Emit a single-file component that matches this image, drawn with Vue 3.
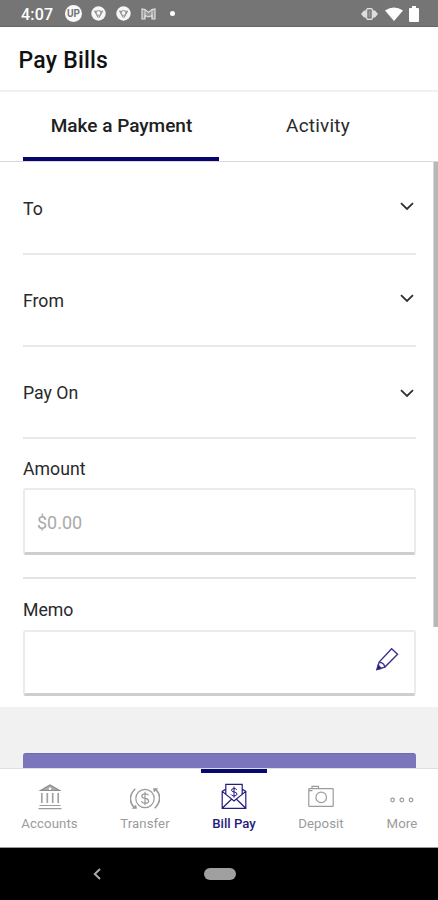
<script setup>
const selectors = [
  { label: 'To', lift: 'high' },
  { label: 'From', lift: 'high' },
  { label: 'Pay On', lift: 'low' }
]
</script>

<template>
  <div class="screen">
    <div class="status">
      <span class="time">4:07</span>
      <span class="badge"><span>UP</span></span>
      <svg v-for="n in 2" :key="n" class="chrome" viewBox="0 0 15 15">
        <circle cx="7.5" cy="7.5" r="7.2" fill="#f6f6f6" />
        <path d="M3 5.2H12M4 5.5L7.2 11.5M11.4 5.5L8 11.5" fill="none" stroke="#909090" stroke-width="1.1" />
        <circle cx="7.5" cy="7" r="2.4" fill="#f6f6f6" stroke="#929292" />
      </svg>
      <svg class="mail" viewBox="0 0 15 12">
        <path d="M1 11V1L4 1.4L7.5 4.4L11 1.4L14 1V11H11V7.5L7.5 9L4 7.5V11Z" fill="#999" stroke="#e6e6e6" stroke-width="1.1" />
        <path d="M4 2V10M11 2V10" stroke="#ddd" />
      </svg>
      <span class="dot"></span>
      <span class="grow"></span>
      <svg class="vibrate" viewBox="0 0 17 14">
        <path d="M0 7L3 3.5H4.5L6 1H11L12.5 3.5H14L17 7L14 10.5H12.5L11 13H6L4.5 10.5H3Z" fill="#dedede" />
        <rect x="6.9" y="3" width="3.2" height="8" fill="#999" stroke="#686868" />
      </svg>
      <svg class="wifi" viewBox="0 0 18 14">
        <path d="M0 3.5Q9-2.5 18 3.5L9 14Z" fill="#fff" />
      </svg>
      <svg class="battery" viewBox="0 0 10 16">
        <path d="M3 0H7V2H9Q10 2 10 3V15Q10 16 9 16H1Q0 16 0 15V3Q0 2 1 2H3Z" fill="#fff" />
      </svg>
    </div>

    <header class="header"><h1>Pay Bills</h1></header>

    <div class="tabs">
      <div class="tab active"><span>Make a Payment</span></div>
      <div class="tab"><span>Activity</span></div>
    </div>

    <main class="content">
      <div class="form">
        <div v-for="s in selectors" :key="s.label" class="select-row">
          <span>{{ s.label }}</span>
          <svg class="chevron" :class="s.lift" viewBox="0 0 14 9">
            <path d="M1 1.2L7 7L13 1.2" fill="none" stroke="#303034" stroke-width="1.8" />
          </svg>
        </div>
        <div class="field amount">
          <label>Amount</label>
          <div class="box">$0.00</div>
        </div>
        <div class="field memo">
          <label>Memo</label>
          <div class="box">
            <svg class="pencil" viewBox="0 0 24 24">
              <path d="M1.2 22.8L3.3 15.2L16.3 1.3L22.5 7L9.3 20.4Z" />
              <path d="M3.3 15.2L6 16L8 17.5L9.3 20.4" />
              <path class="tip" d="M1 23L2.3 18.4L5.4 21.7Z" />
            </svg>
          </div>
        </div>
      </div>
      <div class="actions"><div class="submit"></div></div>
      <div class="scrollbar"></div>
    </main>

    <nav class="nav">
      <div class="item">
        <svg viewBox="0 0 30 28">
          <path d="M5.5 7.5L15 2L24.5 7.5Z" fill="#aaa" stroke="#8d8d8d" />
          <circle cx="15" cy="5.7" r="1.2" fill="#fff" stroke="none" />
          <path d="M6.8 10V20M12.3 10V20M17.7 10V20M23.2 10V20" stroke="#a2a2a2" stroke-width="1.7" />
          <path d="M4.5 22.5H25.5M3.5 25.7H26.5" />
        </svg>
        <span>Accounts</span>
      </div>
      <div class="item">
        <svg viewBox="0 0 30 28">
          <circle cx="15" cy="15.5" r="9.2" />
          <path d="M18.5 12.2Q17.8 10.8 15 10.8Q11.8 10.8 11.8 13.2Q11.8 15 15 15.4Q18.6 15.8 18.6 18Q18.6 20.3 15 20.3Q12.2 20.3 11.4 18.3M15 8.8V22.2" />
          <path d="M5.2 5.8Q-4 15.5 4.2 24.8M24.8 25.2Q34 15.5 25.8 6.2" stroke-width="1.6" />
          <path d="M2.4 25.4H6.6L5.8 22ZM27.6 5.6H23.4L24.2 9Z" fill="#999" stroke-width=".6" />
        </svg>
        <span>Transfer</span>
      </div>
      <div class="item selected">
        <svg viewBox="0 0 30 28">
          <path d="M6.2 6.5L3.2 8.4V25.4H26.8V8.4L23.8 6.5M3.2 8.4L15 18L26.8 8.4M3.5 25L12.5 16.2M26.5 25L17.5 16.2M6.8 11V1.4H23.2V11" />
          <path d="M17.8 6.8Q17.2 5.5 15 5.5Q12.5 5.5 12.5 7.2Q12.5 8.6 15 8.9Q18 9.4 18 11.1Q18 12.9 15 12.9Q12.7 12.9 12 11.4M15 3.5V14.7" stroke-width="1" />
        </svg>
        <span>Bill Pay</span>
      </div>
      <div class="item">
        <svg viewBox="0 0 30 28">
          <rect x="2.8" y="5.6" width="24.4" height="17.8" rx=".6" />
          <path d="M6 5.2V3.4H12.5V5.2M3 7.6H6.5" />
          <circle cx="15.2" cy="14.4" r="5.3" />
        </svg>
        <span>Deposit</span>
      </div>
      <div class="item">
        <svg viewBox="0 0 30 28">
          <circle cx="5.6" cy="17" r="1.8" /><circle cx="14.8" cy="17" r="1.8" /><circle cx="24" cy="17" r="1.8" />
        </svg>
        <span>More</span>
      </div>
    </nav>

    <div class="system">
      <svg class="back" viewBox="0 0 8 12"><path d="M7 1L1.8 6L7 11" fill="none" stroke="#aaa" stroke-width="2" /></svg>
      <span class="home"></span>
    </div>
  </div>
</template>

<style>
body { margin: 0; background: #fff; }
</style>

<style scoped>
* { box-sizing: border-box; }
svg { display: block; flex: none; }
.screen { width: 438px; height: 900px; display: flex; flex-direction: column; overflow: hidden; background: #fff; color: #29292b; font-family: Roboto, sans-serif; }
.status { height: 27px; flex: none; display: flex; align-items: center; padding: 1px 19px 0 21px; background: #757575; border-bottom: 1px solid #656565; color: #fff; }
.time { width: 44px; font-size: 16px; line-height: 20px; font-weight: 500; letter-spacing: .2px; padding-top: 3px; }
.badge { width: 17px; height: 17px; border-radius: 50%; background: #fafafa; color: #757575; display: flex; align-items: center; justify-content: center; font-size: 10px; line-height: 10px; font-weight: 700; margin-right: 9px; }
.chrome { width: 15px; height: 15px; margin-right: 10px; }
.mail { width: 15px; height: 12px; }
.dot { width: 5px; height: 5px; border-radius: 50%; background: #fff; margin-left: 14px; }
.grow { flex: 1; }
.vibrate { width: 17px; height: 14px; }
.wifi { width: 18px; height: 14px; margin-left: 7px; }
.battery { width: 10px; height: 16px; margin-left: 6px; }
.header { height: 65px; flex: none; display: flex; align-items: center; padding: 4px 18px 0 18.6px; border-bottom: 2px solid #f0f0f0; }
h1 { margin: 0; color: #111; font-size: 23px; line-height: 28px; font-weight: 500; letter-spacing: .2px; }
.tabs { height: 70px; flex: none; display: flex; padding: 0 23px; border-bottom: 1px solid #d8d8da; }
.tab { width: 196px; display: flex; align-items: center; justify-content: center; font-size: 19px; line-height: 24px; letter-spacing: .2px; padding: 0 0 1px 2px; }
.tab.active { border-bottom: 4px solid #06066e; color: #202022; font-weight: 500; letter-spacing: 0; padding: 3px 0 0 1px; }
.content { position: relative; height: 606px; flex: none; display: flex; flex-direction: column; overflow: hidden; }
.form { height: 545px; flex: none; padding: 0 22px 0 23px; }
.select-row { height: 92px; border-bottom: 2px solid #e8e8e8; display: flex; align-items: center; justify-content: space-between; padding: 2px 2px 0 0; font-size: 17.7px; line-height: 24px; }
.select-row:first-child { height: 93px; padding-top: 3px; }
.chevron { width: 14px; height: 9px; }
.chevron.high { margin-bottom: 5px; }
.chevron.low { margin-bottom: 0; }
.field { height: 141px; padding-top: 19px; border-bottom: 2px solid #e4e4e4; }
.field.amount { height: 140px; padding-top: 18px; }
.field label { display: block; height: 31px; font-size: 17.7px; line-height: 24px; }
.box { height: 67px; border: 2px solid #ebebeb; border-bottom: 3px solid #cecece; border-radius: 3px; display: flex; align-items: center; padding: 2px 14px 0 12px; font-size: 18px; color: #aaa; }
.field.memo { border: 0; height: 127px; }
.memo label { height: 32px; }
.memo .box { height: 66px; justify-content: flex-end; padding: 0 15px 7px; }
.pencil { width: 23px; height: 24px; fill: none; stroke: #39308b; stroke-width: 1.4; }
.pencil .tip { fill: #100971; }
.actions { height: 61px; flex: none; padding: 46px 22px 0 23px; background: #f1f1f1; }
.submit { height: 15px; background: #7b76bb; border-top: 1px solid #7169b2; border-radius: 3px 3px 0 0; }
.scrollbar { position: absolute; right: 0; top: 0; width: 5px; height: 465px; background: #b7b7b7; border-left: 1px solid #d7d7d7; }
.nav { height: 80px; flex: none; display: grid; grid-template-columns: 95px 96px 82px 92px 70px; padding-left: 2px; border-top: 1px solid #dedede; border-bottom: 1px solid #999; }
.item { position: relative; display: flex; flex-direction: column; align-items: center; padding-top: 14px; color: #9b9b9b; }
.item svg { width: 30px; height: 28px; fill: none; stroke: currentColor; stroke-width: 1.2; }
.item span { font-size: 13.2px; line-height: 18px; margin-top: 4px; letter-spacing: .1px; white-space: nowrap; }
.item.selected { color: #241b7b; }
.selected span { font-weight: 500; letter-spacing: 0; }
.selected::before { content: ''; position: absolute; top: 0; left: 8px; width: 66px; height: 4px; background: #080875; }
.system { height: 52px; flex: none; display: flex; align-items: center; padding-left: 93px; background: #000; }
.back { width: 8px; height: 12px; }
.home { width: 32px; height: 12px; border-radius: 6px; background: #a0a0a0; margin-left: 103px; }
</style>
